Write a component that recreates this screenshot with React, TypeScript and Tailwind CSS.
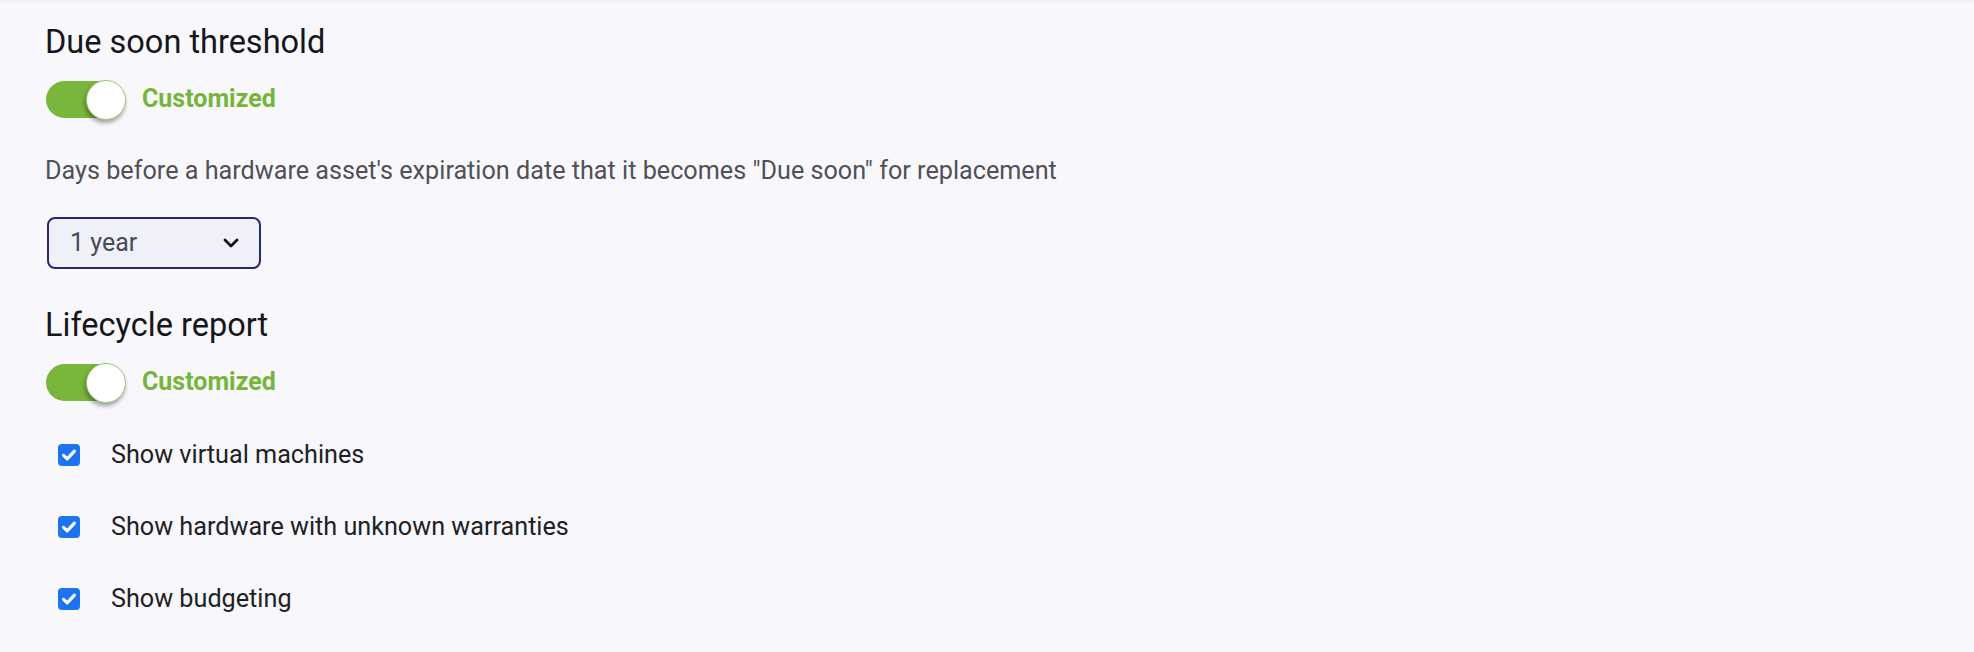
import { useState } from 'react';

const options = ['30 days', '60 days', '90 days', '6 months', '1 year', '2 years'];

const reportOptions = [
  { id: 'vms', label: 'Show virtual machines' },
  { id: 'warranties', label: 'Show hardware with unknown warranties' },
  { id: 'budgeting', label: 'Show budgeting' },
];

function Toggle({ on, onChange }: { on: boolean; onChange: () => void }) {
  return (
    <div className="flex items-center h-[40px] gap-[17px]">
      <button
        type="button"
        onClick={onChange}
        className={`relative ml-[1px] w-[79px] h-[37px] rounded-full ${on ? 'bg-[#79b63c]' : 'bg-[#c9c9d1]'}`}
      >
        <span
          className={`absolute top-[-1px] w-[40px] h-[40px] rounded-full bg-white border border-[#9fc97a] shadow-[-1px_3px_4px_rgba(0,0,0,0.35)] ${on ? 'right-[-1px]' : 'left-[-1px]'}`}
        />
      </button>
      <span className="text-[25px] leading-[40px] font-bold text-[#76b53a]">{on ? 'Customized' : 'Default'}</span>
    </div>
  );
}

function Check({ checked, label, onChange }: { checked: boolean; label: string; onChange: () => void }) {
  return (
    <label className="flex items-center h-[40px] gap-[31px] cursor-pointer">
      <span
        onClick={onChange}
        className={`ml-[13px] w-[22px] h-[22px] rounded-[4px] flex items-center justify-center ${checked ? 'bg-[#1c74ee]' : 'bg-white border-2 border-[#767676]'}`}
      >
        {checked && (
          <svg width="16" height="16" viewBox="0 0 16 16" fill="none">
            <path d="M2.6 8.4 6.2 11.8 13.4 4.2" stroke="white" strokeWidth="3.2" strokeLinecap="round" strokeLinejoin="round" />
          </svg>
        )}
      </span>
      <span className="text-[25.2px] leading-[40px] text-[#202124]">{label}</span>
    </label>
  );
}

export default function App() {
  const [dueSoonCustom, setDueSoonCustom] = useState(true);
  const [lifecycleCustom, setLifecycleCustom] = useState(true);
  const [threshold, setThreshold] = useState('1 year');
  const [checks, setChecks] = useState<Record<string, boolean>>({ vms: true, warranties: true, budgeting: true });

  return (
    <div className="min-h-[652px] bg-[#f8f8fc] border-t-2 border-[#f1f1f5] pt-[21px] pl-[45px] font-['Roboto',sans-serif]">
      {/* Due soon threshold */}
      <h2 className="text-[32.5px] leading-[38px] font-normal text-[#16161a]">Due soon threshold</h2>
      <div className="mt-[18px]">
        <Toggle on={dueSoonCustom} onChange={() => setDueSoonCustom(!dueSoonCustom)} />
      </div>
      <p className="mt-[36px] text-[25.2px] leading-[32px] text-[#505056]">
        Days before a hardware asset's expiration date that it becomes "Due soon" for replacement
      </p>
      <div className="relative mt-[30px] ml-[2px] w-[214px] h-[52px]">
        <select
          value={threshold}
          onChange={(e) => setThreshold(e.target.value)}
          className="appearance-none w-full h-full rounded-[8px] border-2 border-[#262a6c] bg-[#eff0f8] pl-[21px] text-[25px] text-[#474c55] outline-none"
        >
          {options.map((o) => (
            <option key={o} value={o}>
              {o}
            </option>
          ))}
        </select>
        <svg
          className="absolute right-[22px] top-[21px] pointer-events-none"
          width="16"
          height="10"
          viewBox="0 0 16 10"
          fill="none"
        >
          <path d="M2 2 8 8 14 2" stroke="#111" strokeWidth="2.8" strokeLinecap="round" strokeLinejoin="round" />
        </svg>
      </div>

      {/* Lifecycle report */}
      <h2 className="mt-[37px] text-[32.5px] leading-[38px] font-normal text-[#16161a]">Lifecycle report</h2>
      <div className="mt-[18px]">
        <Toggle on={lifecycleCustom} onChange={() => setLifecycleCustom(!lifecycleCustom)} />
      </div>
      <div className="mt-[33px] flex flex-col gap-[32px]">
        {reportOptions.map((opt) => (
          <Check
            key={opt.id}
            label={opt.label}
            checked={checks[opt.id]}
            onChange={() => setChecks({ ...checks, [opt.id]: !checks[opt.id] })}
          />
        ))}
      </div>
    </div>
  );
}
